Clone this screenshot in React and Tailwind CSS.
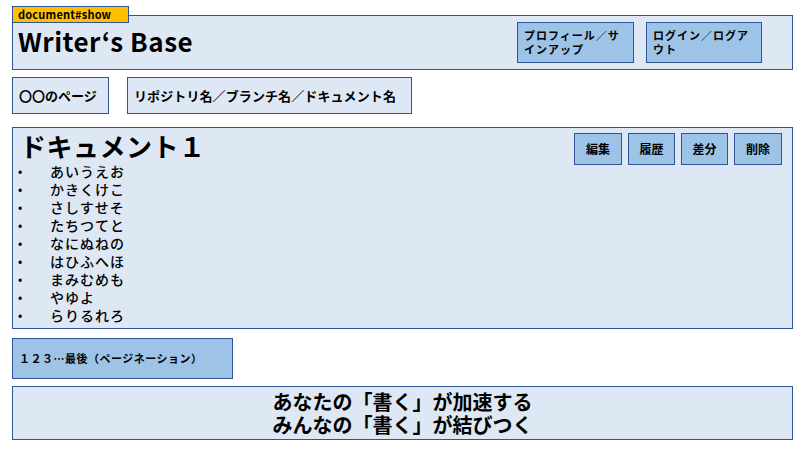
export default function App() {
  const items = ["あいうえお", "かきくけこ", "さしすせそ", "たちつてと", "なにぬねの", "はひふへほ", "まみむめも", "やゆよ", "らりるれろ"];
  const font = { fontFamily: '"Noto Sans CJK JP", "Noto Sans", sans-serif' };
  return (
    <div className="w-[800px] h-[450px] bg-white text-black pl-[12px] pt-[15px]" style={font}>
      <div className="w-[781px] flex flex-col">
        {/* header */}
        <div className="relative h-[55px] border border-[#2f5597] bg-[#dee8f4] flex items-start">
          <div className="absolute left-[-1px] top-[-10px] w-[117px] h-[17px] border border-[#2f5597] bg-[#ffc000] text-[11px] font-bold leading-[15px] pl-[5px] tracking-[0.2px]">document#show</div>
          <div className="text-[26px] font-bold leading-none pl-[5px] pt-[12px] tracking-[0.5px]">Writer‘s Base</div>
          <div className="ml-auto flex gap-[12px] pt-[6px] pr-[30px]">
            <div className="w-[117px] h-[41px] border border-[#2f5597] bg-[#9dc3e6] text-[11px] font-bold leading-[14px] px-[6px] pt-[5px] tracking-[1px]">プロフィール／サインアップ</div>
            <div className="w-[116px] h-[41px] border border-[#2f5597] bg-[#9dc3e6] text-[11px] font-bold leading-[14px] px-[6px] pt-[5px] tracking-[1px]">ログイン／ログアウト</div>
          </div>
        </div>
        {/* row 2 */}
        <div className="flex gap-[18px] mt-[7px]">
          <div className="w-[97px] h-[37px] border border-[#2f5597] bg-[#dee8f4] text-[13px] font-bold flex items-center pl-[6px]">〇〇のページ</div>
          <div className="w-[285px] h-[37px] border border-[#2f5597] bg-[#dee8f4] text-[13px] font-bold flex items-center pl-[6px] tracking-[0.1px]">リポジトリ名／ブランチ名／ドキュメント名</div>
        </div>
        {/* document */}
        <div className="mt-[13px] h-[202px] border border-[#2f5597] bg-[#dee8f4] flex flex-col">
          <div className="flex items-start">
            <div className="text-[26px] font-bold leading-none pl-[7px] pt-[5px] tracking-[0.5px]">ドキュメント１</div>
            <div className="ml-auto flex gap-[6px] pt-[5px] pr-[10px]">
              {["編集", "履歴", "差分", "削除"].map((t, i) => (
                <div key={t} className={`${i === 0 || i === 3 ? "w-[48px]" : "w-[47px]"} h-[32px] border border-[#2f5597] bg-[#9dc3e6] text-[12px] font-bold flex items-center justify-center`}>{t}</div>
              ))}
            </div>
          </div>
          <ul className="flex flex-col -mt-[3px]">
            {items.map((t) => (
              <li key={t} className="flex items-center h-[18px] text-[14px] font-medium leading-[18px]">
                <span className="w-[37px] pl-[5px] text-[12px]">•</span>
                <span className="tracking-[1px]">{t}</span>
              </li>
            ))}
          </ul>
        </div>
        {/* pagination */}
        <div className="mt-[9px] w-[221px] h-[41px] border border-[#2f5597] bg-[#9dc3e6] text-[11px] font-bold flex items-center pl-[6px] tracking-[0.5px]">１２３…最後（ページネーション）</div>
        {/* footer */}
        <div className="mt-[7px] h-[54px] border border-[#2f5597] bg-[#dee8f4] flex flex-col items-center justify-center text-[20px] font-bold leading-[23px]">
          <div>あなたの「書く」が加速する</div>
          <div>みんなの「書く」が結びつく</div>
        </div>
      </div>
    </div>
  );
}
